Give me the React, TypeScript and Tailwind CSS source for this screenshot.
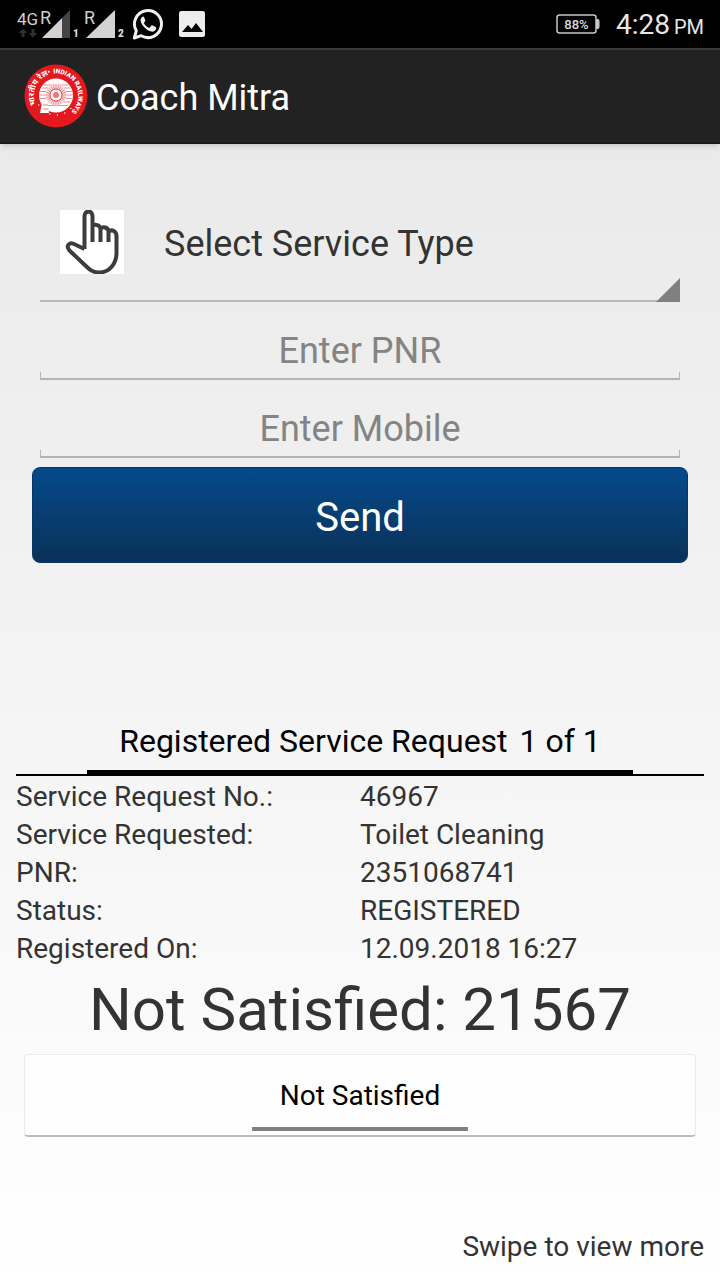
import React, { useState } from 'react';

const details = [
  { label: 'Service Request No.:', value: '46967' },
  { label: 'Service Requested:', value: 'Toilet Cleaning' },
  { label: 'PNR:', value: '2351068741' },
  { label: 'Status:', value: 'REGISTERED' },
  { label: 'Registered On:', value: '12.09.2018 16:27' },
];

function SignalIcons() {
  return (
    <svg className="h-12 w-32" viewBox="0 0 128 48" aria-hidden="true" fontFamily="Roboto, sans-serif">
      <path d="M62 18 70 10V38H62Z" fill="#444" />
      <path d="M42 38 62 18V38Z" fill="#d2d2d2" />
      <path d="M86 38 115 10V38Z" fill="#d2d2d2" />
      <text x="17" y="25" fontSize="17" fill="#cfcfcf">4G</text>
      <text x="40" y="24" fontSize="18" fill="#cfcfcf">R</text>
      <text x="84" y="24" fontSize="18" fill="#cfcfcf">R</text>
      <text x="73" y="37" fontSize="10" fontWeight="900" fill="#dddddd">1</text>
      <text x="118" y="37" fontSize="10" fontWeight="900" fill="#dddddd">2</text>
      <path d="M23 28.500l-4.500 4.500h3v4h3v-4h3zM33 37.500l4.500-4.500h-3v-4h-3v4h-3z" fill="#2f2f2f" />
    </svg>
  );
}

function WhatsAppIcon() {
  return (
    <svg className="size-8" viewBox="0 0 32 32" aria-hidden="true">
      <path
        d="M2.300 30 4.300 22.800A13.500 13.500 0 1 1 9.200 27.700Z"
        fill="none"
        stroke="#efefef"
        strokeWidth="3"
        strokeLinejoin="round"
      />
      <path
        d="M11.500 8.500c-.6 0-1.200.2-1.700.8-.8.9-1.400 1.900-1.200 3.500.2 1.900 1.500 3.900 3.200 5.900 2.200 2.500 4.800 4.300 7.600 4.900 1.800.4 3.900-.7 4.500-2.100.4-.9.400-1.800.2-2.100-.4-.5-3.500-2-4-2.100-.4-.1-.7.100-1 .5l-1.300 1.700c-.3.300-.6.400-1 .2-1.900-.8-3.700-2.400-4.800-4.400-.2-.4-.1-.6.200-.9l.9-1.100c.3-.4.300-.7.200-1.100l-1.200-3c-.2-.500-.4-.700-.600-.700Z"
        fill="#efefef"
      />
    </svg>
  );
}

function PictureIcon() {
  return (
    <svg className="size-7" viewBox="0 0 28 28" aria-hidden="true">
      <rect x="1" y="1" width="26" height="26" rx="2.500" fill="#ededed" />
      <path d="M4 22 10 15 13.500 19 18 13 25 22Z" fill="#050505" />
    </svg>
  );
}

function BatteryIcon() {
  return (
    <svg className="h-5 w-11" viewBox="0 0 44 20" role="img" aria-label="Battery">
      <rect x="1" y="1" width="39" height="18" rx="2.500" fill="none" stroke="#c9c9c9" strokeWidth="1.500" />
      <path d="M40 5h1.500a2 2 0 0 1 2 2v6a2 2 0 0 1-2 2H40z" fill="#c9c9c9" />
      <text x="20.500" y="15" fontSize="13" fontWeight="500" textAnchor="middle" fill="#dddddd" fontFamily="Roboto, sans-serif">
        88%
      </text>
    </svg>
  );
}

function RailwayLogo() {
  const spokes = Array.from({ length: 24 }, (_, i) => i * 15);
  const dots = [42, 64, 86, 108, 130, 150].map((a) => (a * Math.PI) / 180);
  return (
    <svg className="size-16" viewBox="0 0 64 64" role="img" aria-label="Indian Railways">
      <defs>
        <path id="arc-left" d="M12 40.800A22 22 0 0 1 26.300 10.300" />
        <path id="arc-right" d="M29.500 9.600A22 22 0 0 1 43 50.600" />
      </defs>
      <circle cx="32" cy="32" r="31.500" fill="#e3191f" />
      <text fontSize="8" fontWeight="700" fill="#fff" fontFamily="'Noto Sans', 'Open Sans', sans-serif">
        <textPath href="#arc-left">भारतीय रेल</textPath>
      </text>
      <text fontSize="6.500" fontWeight="900" fill="#fff" fontFamily="Roboto, sans-serif">
        <textPath href="#arc-right">INDIAN RAILWAYS</textPath>
      </text>
      <circle cx="24.800" cy="7.800" r="1" fill="#fff" />
      <circle cx="32" cy="31.500" r="17" fill="#fff" />
      <path
        d="M20 21H44M17.500 24H46.500M16 27.500H48M15.500 31H48.500M16 34.500H48M17.500 38H46.500M20 41.500H44"
        stroke="#e3191f"
        strokeWidth="0.900"
        opacity="0.550"
      />
      <circle cx="32" cy="31" r="10.500" fill="#fbe3e4" />
      <g stroke="#e3191f" strokeWidth="0.600" opacity="0.700">
        {spokes.map((a) => (
          <path key={a} d="M32 25.500V21" transform={`rotate(${a} 32 31)`} />
        ))}
      </g>
      <circle cx="32" cy="31" r="6" fill="#fff" stroke="#e3191f" strokeWidth="0.900" opacity="0.850" />
      <circle cx="32" cy="31" r="3" fill="#e3191f" opacity="0.600" />
      <path d="M16 49 18.500 36H23.500L25 49Z" fill="#fff" />
      <path d="M19 41H24M18.500 45H24.500" stroke="#e3191f" strokeWidth="0.600" />
      {dots.map((a) => (
        <circle key={a} cx={32 + 20 * Math.cos(a)} cy={31 + 20 * Math.sin(a)} r="0.700" fill="#fff" />
      ))}
    </svg>
  );
}

function HandIcon() {
  return (
    <svg className="size-16 bg-white" viewBox="0 0 64 64" aria-hidden="true">
      <path
        d="M24.500 39V6C24.500 0 32.500 0 32.500 6V32M32.500 16C35 13.500 40 15 40.500 19V32M40.500 18.500C43 16 48 17.500 48.500 21V32M48.500 21.500C52 19 56.500 21 56.500 26V43C56.500 53 50 62.500 39 62.500C34 62.500 30.500 60.500 28 58L10 41C4.500 35.500 10 31.500 15 34.500L24.500 39"
        fill="#fff"
        stroke="#3c3c3c"
        strokeWidth="4"
        strokeLinejoin="round"
      />
    </svg>
  );
}

function UnderlinedField({ label, type }: { label: string; type: string }) {
  return (
    <label className="mx-10 block">
      <input
        type={type}
        aria-label={label}
        placeholder={label}
        className="block h-[70px] w-full bg-transparent pt-7 text-center text-4xl text-[#333333] outline-none placeholder:text-[#848484]"
      />
      <span className="block h-2 border-x border-b-2 border-[#b4b4b4]" />
    </label>
  );
}

export default function App() {
  const [service, setService] = useState('');

  return (
    <div className="flex min-h-screen flex-col bg-linear-to-b from-[#e7e7e7] to-white font-[Roboto,sans-serif] text-[#333333]">
      <div className="flex h-12 items-center bg-black text-[#e6e6e6]">
        <SignalIcons />
        <div className="ml-1 flex items-center gap-3.5">
          <WhatsAppIcon />
          <PictureIcon />
        </div>
        <div className="mr-4 ml-auto flex items-center gap-4">
          <BatteryIcon />
          <div className="flex items-baseline gap-1 pt-1">
            <span className="text-[28px] leading-8">4:28</span>
            <span className="text-xl leading-8">PM</span>
          </div>
        </div>
      </div>

      <header className="flex h-24 items-center gap-2 border-t-2 border-b-2 border-t-[#3a3a3a] border-b-[#1a1516] bg-[#222222] pl-6 text-white shadow-md">
        <RailwayLogo />
        <h1 className="pt-1 text-4xl">Coach Mitra</h1>
      </header>

      <main className="flex flex-1 flex-col">
        <form className="mt-10 flex flex-col" onSubmit={(e) => e.preventDefault()}>
          <label className="relative mx-10 flex h-[118px] items-center border-b-2 border-[#b8b8b8] pl-5">
            <HandIcon />
            <select
              aria-label="Select Service Type"
              value={service}
              onChange={(e) => setService(e.target.value)}
              className="ml-10 min-w-0 flex-1 appearance-none bg-transparent pt-1 text-4xl outline-none"
            >
              <option value="">Select Service Type</option>
              <option value="cleaning">Toilet Cleaning</option>
            </select>
            <svg className="absolute right-0 bottom-[-2px] size-6" viewBox="0 0 24 24" aria-hidden="true">
              <path d="M24 0V24H0Z" fill="#808080" />
            </svg>
          </label>
          <UnderlinedField label="Enter PNR" type="text" />
          <UnderlinedField label="Enter Mobile" type="tel" />
          <button
            type="submit"
            className="mx-8 mt-[9px] h-24 rounded-lg border border-[#07376a] bg-linear-to-b from-[#044a8c] to-[#0a3158] pt-1.5 text-[40px] text-white"
          >
            Send
          </button>
        </form>

        <section className="mx-4 mt-[145px]">
          <div className="flex justify-center border-b-2 border-black">
            <h2 className="-mb-0.5 flex gap-3 border-b-6 border-black px-8 pt-2.5 pb-1.5 text-[32px] leading-[46px] text-black">
              <span>Registered Service Request</span>
              <span>1 of 1</span>
            </h2>
          </div>
          <table className="mt-0.5 w-full table-fixed text-left text-[28px] leading-[38px]">
            <tbody>
              {details.map((row) => (
                <tr key={row.label}>
                  <th scope="row" className="p-0 font-normal">{row.label}</th>
                  <td className="p-0">{row.value}</td>
                </tr>
              ))}
            </tbody>
          </table>
          <p className="mt-1 text-center text-[60px] leading-[76px]">Not Satisfied: 21567</p>
          <button
            type="button"
            className="mx-2 mt-1.5 flex h-[83px] w-[calc(100%-16px)] flex-col items-center rounded-sm border border-b-2 border-[#ececec] border-b-[#bdbdbd] bg-[#fefefe] text-[28px] text-black"
          >
            <span className="flex h-[76px] items-center border-b-4 border-[#808080] px-7 pt-2.5">Not Satisfied</span>
          </button>
        </section>

        <p className="mt-auto mr-4 pt-8 pb-[15px] text-right text-[28px] leading-9">Swipe to view more</p>
      </main>
    </div>
  );
}
